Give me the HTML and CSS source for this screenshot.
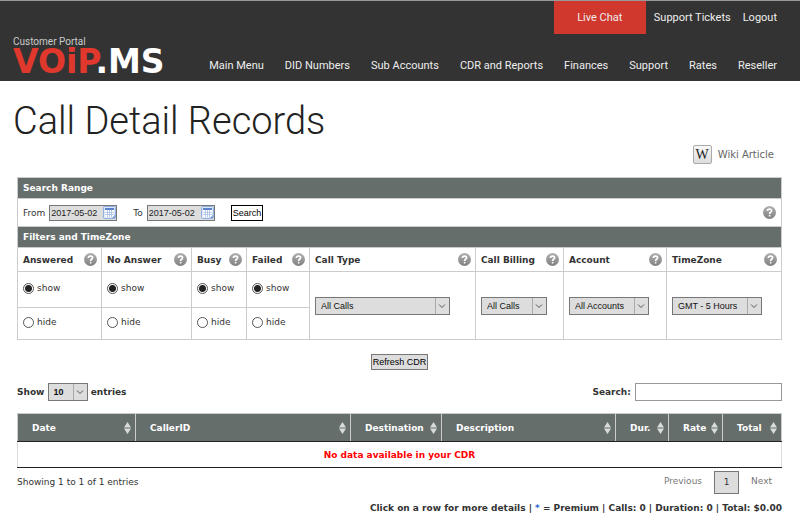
FILE: index.html
```html
<!DOCTYPE html>
<html lang="en">
<head>
    <meta charset="UTF-8">
    <meta name="viewport" content="width=device-width, initial-scale=1.0">
    <title>Call Detail Records</title>
    <link rel="stylesheet" href="styles.css">
</head>
<body>
    <svg class="sprite" aria-hidden="true">
        <defs>
            <linearGradient id="helpFill" x1="0" y1="0" x2="0" y2="1">
                <stop offset="0" stop-color="#b0b0b0"/>
                <stop offset="1" stop-color="#808080"/>
            </linearGradient>
        </defs>
        <symbol id="help" viewBox="0 0 13 13">
            <circle cx="6.5" cy="6.5" r="6.5" fill="url(#helpFill)"/>
            <path d="M4.4 4.9C4.4 2.5 8.6 2.5 8.6 4.8C8.6 6.3 6.6 6.2 6.6 7.9" fill="none" stroke="#fff" stroke-width="1.6"/>
            <rect x="5.8" y="8.9" width="1.6" height="1.6" fill="#fff"/>
        </symbol>
        <symbol id="calendar" viewBox="0 0 13 13">
            <rect x="0.5" y="0.5" width="12" height="12" rx="1" fill="#dbe7f8" stroke="#8fb0e0"/>
            <rect x="2" y="2" width="9" height="2" fill="#5c82cc"/>
            <rect x="2" y="4" width="9" height="7" fill="#fff"/>
            <path d="M2 6.500H11M2 8.500H11M4.500 4V11M6.500 4V11M8.500 4V11" stroke="#a9bfe2" stroke-width="0.8"/>
            <path d="M9 12L12 9V12Z" fill="#7d9fd6"/>
        </symbol>
        <symbol id="sort" viewBox="0 0 7 12">
            <path d="M3.5 0L7 5.500H0ZM0 6.500H7L3.5 12Z" fill="#d8dcdb"/>
        </symbol>
    </svg>

    <header class="header">
        <nav class="top-links">
            <a href="#" class="live-chat">Live Chat</a>
            <a href="#">Support Tickets</a>
            <a href="#">Logout</a>
        </nav>
        <div class="header-main">
            <a href="#" class="brand">
                <span class="brand-tag">Customer Portal</span>
                <span class="logo"><span class="logo-red">VOiP</span>.MS</span>
            </a>
            <nav class="main-nav">
                <a href="#">Main Menu</a>
                <a href="#">DID Numbers</a>
                <a href="#">Sub Accounts</a>
                <a href="#">CDR and Reports</a>
                <a href="#">Finances</a>
                <a href="#">Support</a>
                <a href="#">Rates</a>
                <a href="#">Reseller</a>
            </nav>
        </div>
    </header>

    <main class="content">
        <h1>Call Detail Records</h1>
        <div class="wiki">
            <a href="#"><span class="wiki-icon">W</span>Wiki Article</a>
        </div>

        <table class="filters">
            <colgroup>
                <col class="col-answered"><col class="col-noanswer"><col class="col-busy"><col class="col-failed">
                <col><col class="col-billing"><col class="col-account"><col class="col-zone">
            </colgroup>
            <tr class="section"><th colspan="8">Search Range</th></tr>
            <tr class="range">
                <td colspan="8">
                    <div class="range-row">
                        <label for="from">From</label>
                        <span class="date"><input type="text" id="from" value="2017-05-02"><svg><use href="#calendar"/></svg></span>
                        <label for="to" class="to">To</label>
                        <span class="date"><input type="text" id="to" value="2017-05-02"><svg><use href="#calendar"/></svg></span>
                        <button class="search-btn">Search</button>
                        <svg class="help"><use href="#help"/></svg>
                    </div>
                </td>
            </tr>
            <tr class="section"><th colspan="8">Filters and TimeZone</th></tr>
            <tr class="names">
                <th><div class="name">Answered<svg class="help"><use href="#help"/></svg></div></th>
                <th><div class="name">No Answer<svg class="help"><use href="#help"/></svg></div></th>
                <th><div class="name">Busy<svg class="help"><use href="#help"/></svg></div></th>
                <th><div class="name">Failed<svg class="help"><use href="#help"/></svg></div></th>
                <th><div class="name">Call Type<svg class="help"><use href="#help"/></svg></div></th>
                <th><div class="name">Call Billing<svg class="help"><use href="#help"/></svg></div></th>
                <th><div class="name">Account<svg class="help"><use href="#help"/></svg></div></th>
                <th><div class="name">TimeZone<svg class="help"><use href="#help"/></svg></div></th>
            </tr>
            <tr class="show">
                <td><label class="radio"><input type="radio" name="answered" checked>show</label></td>
                <td><label class="radio"><input type="radio" name="noanswer" checked>show</label></td>
                <td><label class="radio"><input type="radio" name="busy" checked>show</label></td>
                <td><label class="radio"><input type="radio" name="failed" checked>show</label></td>
                <td rowspan="2"><select class="select wide" aria-label="Call Type"><option>All Calls</option></select></td>
                <td rowspan="2"><select class="select" aria-label="Call Billing"><option>All Calls</option></select></td>
                <td rowspan="2"><select class="select account" aria-label="Account"><option>All Accounts</option></select></td>
                <td rowspan="2"><select class="select zone" aria-label="TimeZone"><option>GMT - 5 Hours</option></select></td>
            </tr>
            <tr class="hide">
                <td><label class="radio"><input type="radio" name="answered">hide</label></td>
                <td><label class="radio"><input type="radio" name="noanswer">hide</label></td>
                <td><label class="radio"><input type="radio" name="busy">hide</label></td>
                <td><label class="radio"><input type="radio" name="failed">hide</label></td>
            </tr>
        </table>

        <div class="refresh"><button class="refresh-btn">Refresh CDR</button></div>

        <div class="table-tools">
            <label>Show <select class="select length"><option>10</option></select> entries</label>
            <label>Search: <input type="text" class="table-search"></label>
        </div>

        <table class="cdr">
            <colgroup>
                <col class="col-date"><col class="col-caller"><col class="col-dest"><col>
                <col class="col-dur"><col class="col-rate"><col class="col-total">
            </colgroup>
            <thead>
                <tr>
                    <th><div class="name">Date<svg class="sort"><use href="#sort"/></svg></div></th>
                    <th><div class="name">CallerID<svg class="sort"><use href="#sort"/></svg></div></th>
                    <th><div class="name">Destination<svg class="sort"><use href="#sort"/></svg></div></th>
                    <th><div class="name">Description<svg class="sort"><use href="#sort"/></svg></div></th>
                    <th><div class="name">Dur.<svg class="sort"><use href="#sort"/></svg></div></th>
                    <th><div class="name">Rate<svg class="sort"><use href="#sort"/></svg></div></th>
                    <th><div class="name">Total<svg class="sort"><use href="#sort"/></svg></div></th>
                </tr>
            </thead>
            <tbody>
                <tr><td colspan="7">No data available in your CDR</td></tr>
            </tbody>
        </table>

        <div class="table-foot">
            <span>Showing 1 to 1 of 1 entries</span>
            <div class="pager">
                <a href="#">Previous</a>
                <a href="#" class="current">1</a>
                <a href="#">Next</a>
            </div>
        </div>

        <p class="summary">Click on a row for more details | <span class="star">*</span> = Premium | Calls: 0 | Duration: 0 | Total: $0.00</p>
    </main>
</body>
</html>
```

FILE: styles.css
```css
* {
    margin: 0;
    padding: 0;
    box-sizing: border-box;
}

body {
    font-family: "DejaVu Sans", Verdana, sans-serif;
    font-size: 9px;
    line-height: 14px;
    color: #333;
    background: #fff;
}

a {
    color: inherit;
    text-decoration: none;
}

.sprite {
    position: absolute;
    width: 0;
    height: 0;
}

/* Header */
.header {
    background: #333;
    border-top: 1px solid #999;
    color: #eee;
    font-family: Roboto, sans-serif;
    font-size: 11px;
    padding: 0 23px 0 13px;
}

.top-links {
    display: flex;
    justify-content: flex-end;
    gap: 12px;
    line-height: 33px;
}

.top-links .live-chat {
    background: #d0372d;
    width: 92px;
    margin-right: -4px;
    text-align: center;
}

.header-main {
    display: flex;
    justify-content: space-between;
    height: 47px;
}

.brand {
    display: flex;
    flex-direction: column;
}

.brand-tag {
    font-size: 10px;
    line-height: 15px;
    color: #ccc;
}

.logo {
    font-family: "DejaVu Sans", sans-serif;
    font-size: 33px;
    font-weight: bold;
    line-height: 26px;
    color: #fff;
}

.logo-red {
    color: #e0382d;
}

.main-nav {
    display: flex;
    gap: 21px;
    line-height: 64px;
    height: 47px;
}

/* Page */
.content {
    padding: 16px 18px 0 17px;
}

h1 {
    font-family: Roboto, sans-serif;
    font-size: 38px;
    font-weight: 300;
    line-height: 48px;
    margin-left: -4px;
    color: #222;
}

.wiki {
    display: flex;
    justify-content: flex-end;
    padding-right: 8px;
    font-size: 10px;
    color: #666;
}

.wiki a {
    display: flex;
    align-items: center;
    gap: 6px;
}

.wiki-icon {
    width: 19px;
    height: 19px;
    border: 1px solid #aaa;
    border-radius: 2px;
    background: linear-gradient(#f8f8f8, #ddd);
    color: #222;
    font-family: "Liberation Serif", serif;
    font-size: 14px;
    line-height: 18px;
    text-align: center;
}

table {
    width: 100%;
    table-layout: fixed;
    border-collapse: collapse;
}

th {
    text-align: left;
}

.filters {
    margin-top: 13px;
}

.filters th,
.filters td {
    border: 1px solid #ccc;
    padding: 0 5px;
}

.col-answered { width: 84px; }
.col-noanswer { width: 90px; }
.col-busy { width: 55px; }
.col-failed { width: 63px; }
.col-billing { width: 88px; }
.col-account { width: 103px; }
.col-zone { width: 115px; }

.filters .section th {
    height: 21px;
    background: #666e6c;
    color: #fff;
}

.range td {
    height: 28px;
}

.range-row {
    display: flex;
    align-items: center;
    gap: 4px;
}

.to {
    margin-left: 12px;
}

.date {
    display: flex;
    align-items: center;
    width: 68px;
    height: 16px;
    border: 1px solid #777;
    background: #ddd;
}

.date input {
    flex: 1;
    min-width: 0;
    border: none;
    background: none;
    padding-left: 1px;
    font-family: "Liberation Sans", Arial, sans-serif;
    font-size: 9px;
    color: #222;
}

.date svg {
    width: 13px;
    height: 13px;
}

button {
    font-family: "Liberation Sans", Arial, sans-serif;
    font-size: 9px;
    color: #000;
}

.search-btn {
    height: 16px;
    padding: 0 1px;
    margin-left: 12px;
    border: 1px solid #000;
    background: #fff;
}

.help {
    width: 13px;
    height: 13px;
    flex-shrink: 0;
    margin-left: auto;
}

.names th {
    height: 24px;
}

.filters .names th {
    padding-right: 4px;
}

.name {
    display: flex;
    align-items: center;
    justify-content: space-between;
    white-space: nowrap;
}

.show td {
    height: 36px;
}

.hide td {
    height: 32px;
}

.radio {
    display: flex;
    align-items: center;
    gap: 3px;
    padding-bottom: 3px;
    line-height: 11px;
}

.radio input {
    appearance: none;
    width: 11px;
    height: 11px;
    border: 1px solid #555;
    border-radius: 50%;
    background: #fff;
}

.radio input:checked {
    background: radial-gradient(circle, #222 0 3px, #fff 4px);
}

.select {
    appearance: none;
    width: 66px;
    height: 18px;
    padding-left: 5px;
    border: 1px solid #777;
    border-radius: 0;
    background: #ddd url("data:image/svg+xml,%3Csvg xmlns='http://www.w3.org/2000/svg' width='14' height='16'%3E%3Cpath d='M.5 0V16' stroke='%23aaa'/%3E%3Cpath d='M4 6.500L7 9.500L10 6.500' fill='none' stroke='%23555'/%3E%3C/svg%3E") no-repeat right center;
    font-family: "Liberation Sans", Arial, sans-serif;
    font-size: 9px;
    color: #111;
    vertical-align: middle;
}

.select.wide {
    width: 135px;
}

.select.account {
    width: 80px;
}

.select.zone {
    width: 90px;
}

.select.length {
    width: 40px;
    font-weight: bold;
}

.refresh {
    margin-top: 14px;
    text-align: center;
}

.refresh-btn {
    height: 16px;
    padding: 0 1px;
    border: 1px solid #777;
    background: #ddd;
}

.table-tools {
    display: flex;
    justify-content: space-between;
    align-items: center;
    margin-top: 13px;
    font-weight: bold;
}

.table-search {
    width: 147px;
    height: 18px;
    margin-left: 1px;
    border: 1px solid #999;
    vertical-align: middle;
}

/* Records */
.cdr {
    margin-top: 12px;
}

.col-date { width: 118px; }
.col-caller { width: 215px; }
.col-dest { width: 91px; }
.col-dur { width: 53px; }
.col-rate { width: 54px; }
.col-total { width: 59px; }

.cdr th {
    height: 28px;
    padding: 0 4px 0 14px;
    border: 1px solid #ccc;
    border-bottom-color: #222;
    background: #666e6c;
    color: #fff;
}

.sort {
    width: 7px;
    height: 12px;
    flex-shrink: 0;
}

.cdr td {
    height: 26px;
    border: 1px solid #ddd;
    border-bottom-color: #222;
    text-align: center;
    font-weight: bold;
    color: #f00;
}

.table-foot {
    display: flex;
    justify-content: space-between;
    padding-top: 3px;
}

.table-foot > span {
    line-height: 22px;
}

.pager {
    display: flex;
    gap: 12px;
    padding-right: 10px;
    line-height: 21px;
    color: #777;
}

.pager .current {
    width: 25px;
    border: 1px solid #777;
    background: #ddd;
    color: #333;
    text-align: center;
}

.summary {
    margin-top: 7px;
    font-weight: bold;
    text-align: right;
}

.star {
    color: #36c;
}
```
